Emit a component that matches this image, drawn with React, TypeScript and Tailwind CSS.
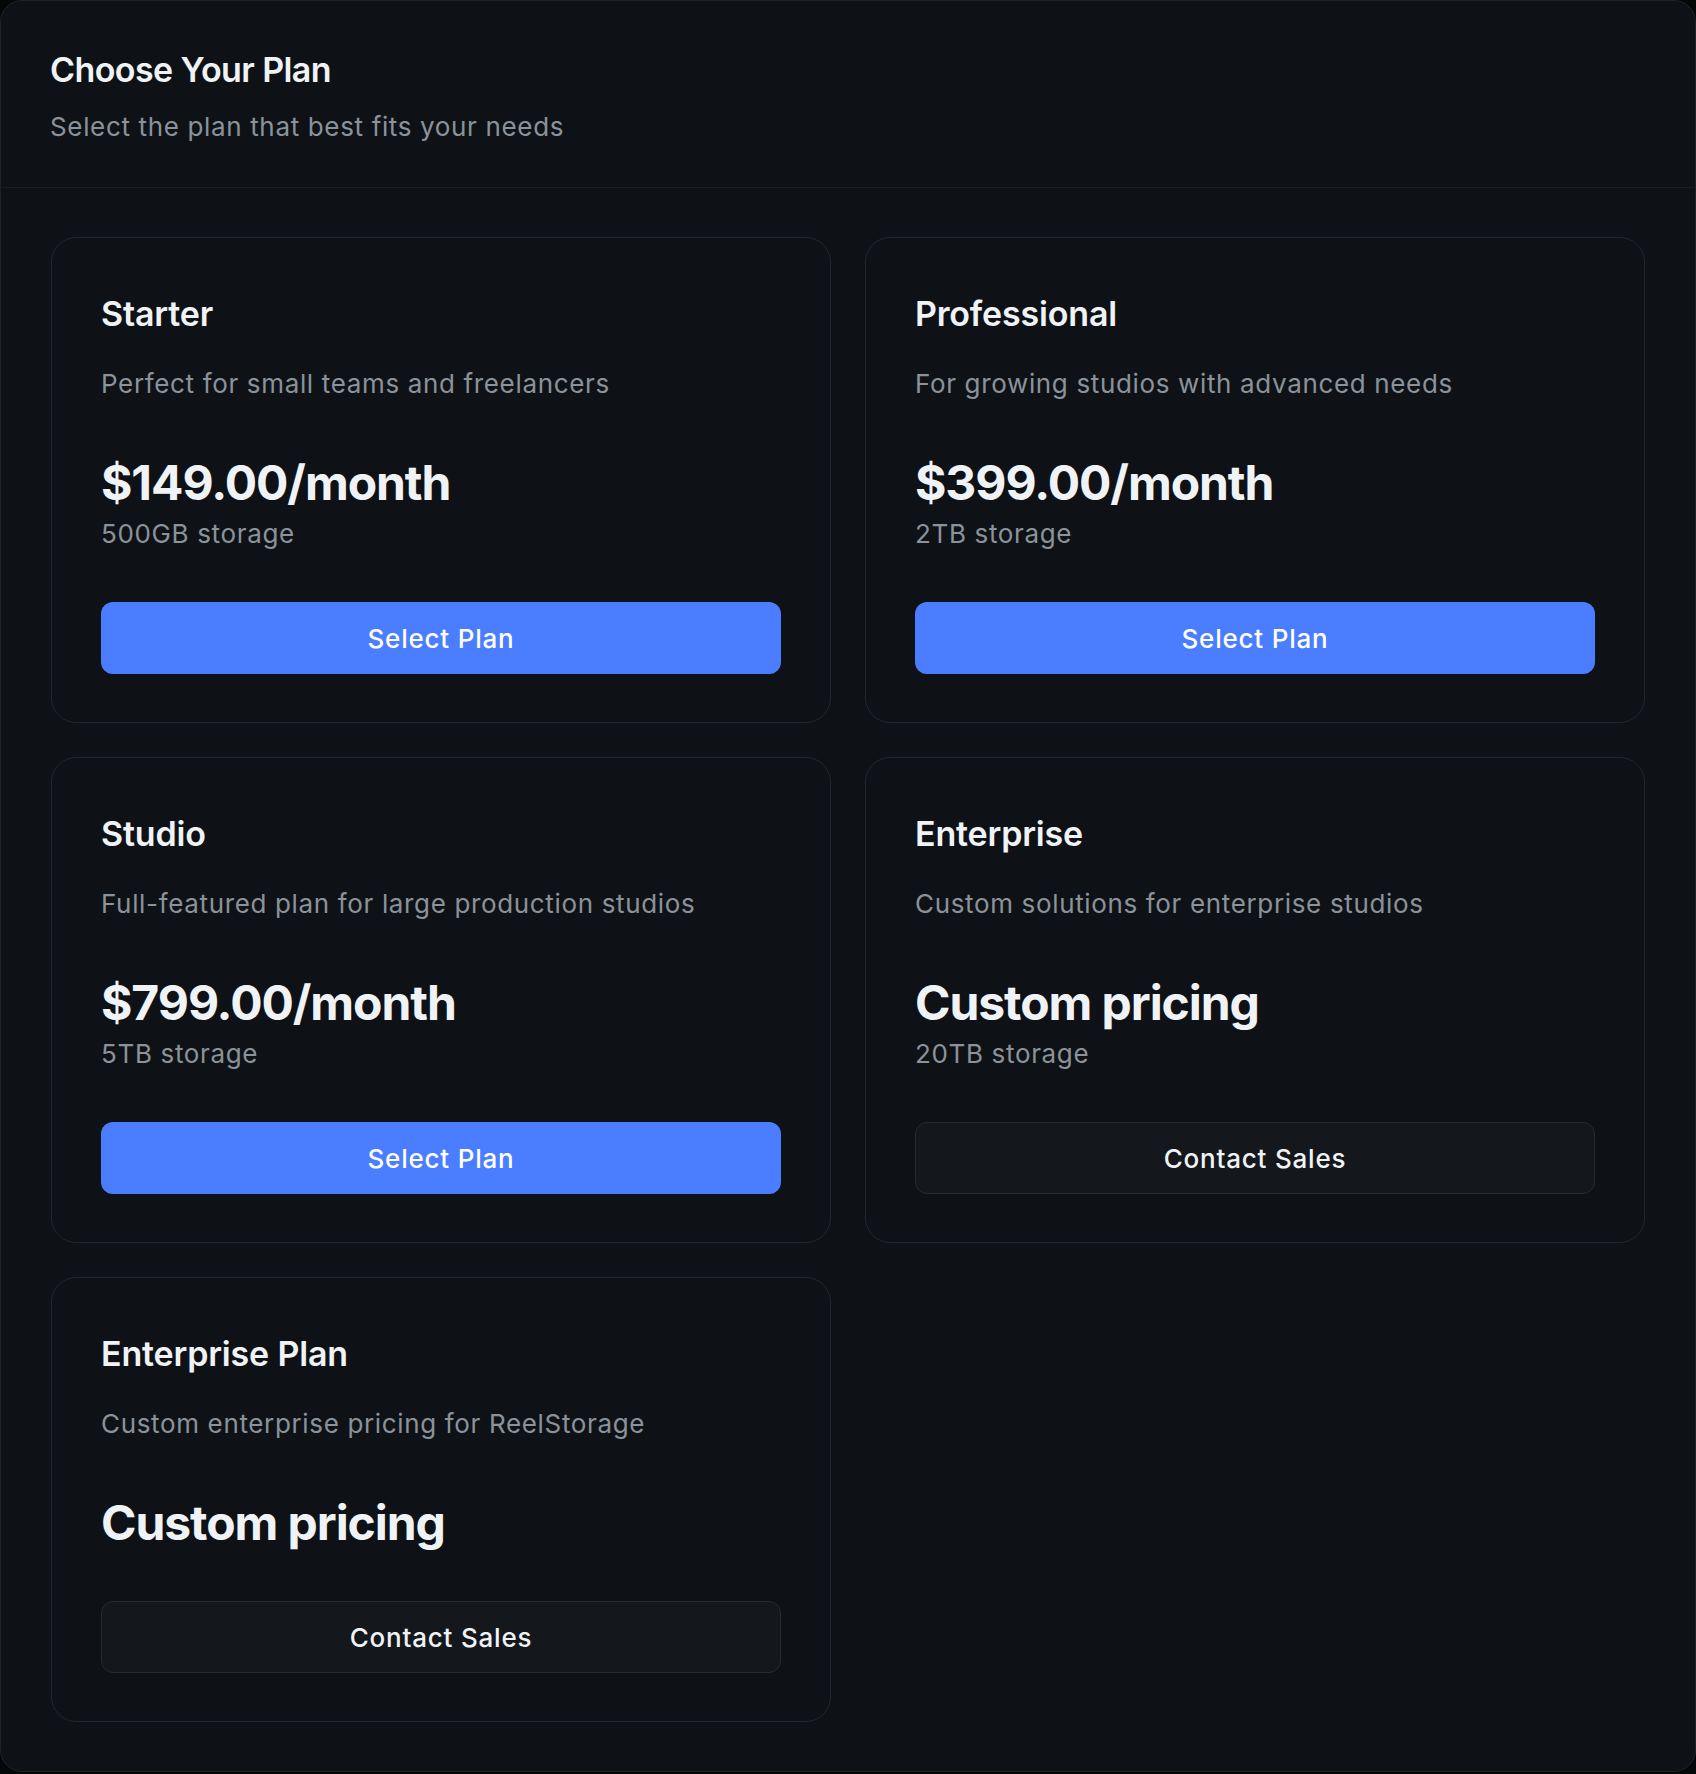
type Plan = {
  name: string;
  description: string;
  price: string;
  storage?: string;
  cta: "select" | "contact";
};

const plans: Plan[] = [
  {
    name: "Starter",
    description: "Perfect for small teams and freelancers",
    price: "$149.00/month",
    storage: "500GB storage",
    cta: "select",
  },
  {
    name: "Professional",
    description: "For growing studios with advanced needs",
    price: "$399.00/month",
    storage: "2TB storage",
    cta: "select",
  },
  {
    name: "Studio",
    description: "Full-featured plan for large production studios",
    price: "$799.00/month",
    storage: "5TB storage",
    cta: "select",
  },
  {
    name: "Enterprise",
    description: "Custom solutions for enterprise studios",
    price: "Custom pricing",
    storage: "20TB storage",
    cta: "contact",
  },
  {
    name: "Enterprise Plan",
    description: "Custom enterprise pricing for ReelStorage",
    price: "Custom pricing",
    cta: "contact",
  },
];

function PlanCard({ plan }: { plan: Plan }) {
  return (
    <div className="flex flex-col rounded-[25px] border border-[#22272d] bg-[#0e1217] px-[49px] pb-[48px] pt-[54px]">
      <h3 className="text-[34px] font-semibold leading-[44px] tracking-[-0.005em] text-[#f0f3f6]">
        {plan.name}
      </h3>
      <p className="mt-[30px] text-[26px] leading-[36px] tracking-[0.025em] text-[#8b929a]">
        {plan.description}
      </p>
      <p className="mt-[53px] text-[48px] font-bold leading-[56px] tracking-[-0.022em] text-[#f0f3f6]">
        {plan.price}
      </p>
      {plan.storage && (
        <p className="mt-[5px] text-[26px] leading-[36px] tracking-[0.025em] text-[#8b929a]">
          {plan.storage}
        </p>
      )}
      {plan.cta === "select" ? (
        <button className="mt-[50px] flex h-[72px] w-full items-center justify-center rounded-[12px] bg-[#4a7dff] text-[26px] font-medium tracking-[0.03em] text-white">
          Select Plan
        </button>
      ) : (
        <button className="mt-[50px] flex h-[72px] w-full items-center justify-center rounded-[12px] border border-[#262b30] bg-[#14181c] text-[26px] font-medium tracking-[0.03em] text-[#f0f3f6]">
          Contact Sales
        </button>
      )}
    </div>
  );
}

export default function App() {
  return (
    <div className="min-h-screen bg-[#050607] font-['Inter',sans-serif]">
      <div className="min-h-[1772px] rounded-[22px] border border-[#1f2328] bg-[#0e1217]">
        <header className="border-b border-[#1b1f24] px-[49px] pb-[42px] pt-[47px]">
          <h2 className="text-[34px] font-semibold leading-[44px] tracking-[-0.017em] text-[#f0f3f6]">
            Choose Your Plan
          </h2>
          <p className="mt-[17px] text-[26px] leading-[36px] tracking-[0.025em] text-[#8b929a]">
            Select the plan that best fits your needs
          </p>
        </header>
        <div className="grid grid-cols-2 gap-x-[34px] gap-y-[34px] px-[50px] pb-[49px] pt-[49px]">
          {plans.map((plan) => (
            <PlanCard key={plan.name} plan={plan} />
          ))}
        </div>
      </div>
    </div>
  );
}
